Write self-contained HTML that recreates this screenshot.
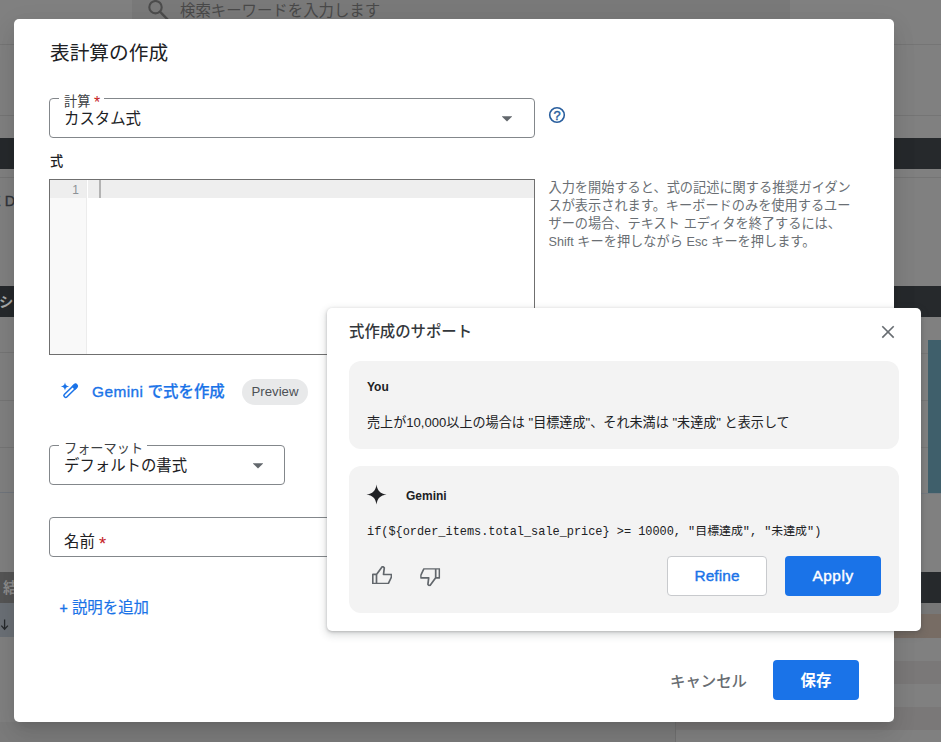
<!DOCTYPE html>
<html lang="ja">
<head>
<meta charset="utf-8">
<title>表計算の作成</title>
<style>
*{box-sizing:border-box;margin:0;padding:0}
html,body{width:941px;height:742px;overflow:hidden}
body{position:relative;background:#808080;font-family:"Liberation Sans","Noto Sans CJK JP",sans-serif;color:#202124}
.abs{position:absolute}
/* ---------- dimmed background page ---------- */
.bg{position:absolute;left:0;top:0;width:941px;height:742px;overflow:hidden}
.bg div{position:absolute}
.bgt{color:#4e4e4e;white-space:nowrap}
/* ---------- dialog ---------- */
#dlg{position:absolute;left:14px;top:19px;width:880px;height:703px;background:#fff;border-radius:5px;
 box-shadow:0 6px 9px -4px rgba(0,0,0,.10),0 14px 24px 2px rgba(0,0,0,.07),0 5px 24px 2px rgba(0,0,0,.06)}
#dlg .t{position:absolute;white-space:nowrap}
.field{position:absolute;border:1px solid #83878b;border-radius:4px;height:40px}
.field .lab{position:absolute;left:9px;top:-4px;background:#fff;padding:0 4px 0 5px;font-size:13.2px;line-height:14px;color:#3c4043;white-space:nowrap}
.field .val{position:absolute;left:14px;top:10px;font-size:15.4px;line-height:20px;color:#202124;white-space:nowrap}
.req{color:#c5221f;font-size:1.200em;line-height:0;position:relative;top:.150em}
.caret{position:absolute;width:10.800px;height:5.400px;background:#62676c;clip-path:polygon(0 0,100% 0,50% 100%);margin-left:-.4px;margin-top:.2px}
/* ---------- popup ---------- */
#pop{position:absolute;left:327px;top:308px;width:594px;height:323px;background:#fff;border-radius:5px;
 box-shadow:0 1px 3px 0 rgba(60,64,67,.3),0 3px 7px 2px rgba(60,64,67,.15)}
#pop .t{position:absolute;white-space:nowrap}
.card{position:absolute;left:22px;width:550px;background:#f3f3f3;border-radius:12px}
.btn{position:absolute;height:40px;border-radius:4px;font-size:15.4px;font-weight:bold;text-align:center;line-height:40px;white-space:nowrap}
</style>
</head>
<body>
<div class="bg">
  <!-- top search box -->
  <div style="left:132px;top:0;width:658px;height:20px;background:#797979"></div>
  <svg class="abs" style="left:146px;top:0" width="24" height="20" viewBox="0 0 24 20"><circle cx="9.500" cy="7.200" r="6.200" fill="none" stroke="#4c4c4c" stroke-width="2.100"/><path d="M13.900 11.700l7.800 7.800" stroke="#4c4c4c" stroke-width="2.400" fill="none"/></svg>
  <div class="bgt" style="left:180px;top:-1.500px;font-size:15.4px;line-height:24px;color:#494949">検索キーワードを入力します</div>
  <!-- left column rows -->
  <div style="left:0;top:44px;width:14px;height:1px;background:#757575"></div>
  <div style="left:0;top:115px;width:14px;height:1px;background:#757575"></div>
  <div style="left:0;top:138px;width:14px;height:31px;background:#26292c"></div>
  <div style="left:0;top:177px;width:14px;height:1px;background:#757575"></div>
  <div class="bgt" style="left:-9px;top:192px;font-size:14.5px;line-height:18px;color:#30343a;-webkit-text-stroke:.3px #30343a">E D</div>
  <div style="left:0;top:286px;width:14px;height:31px;background:#26292c"></div>
  <div class="bgt" style="left:-1px;top:293px;font-size:14.3px;line-height:18px;color:#a9a9a9;font-weight:bold">シ</div>
  <div style="left:0;top:352px;width:14px;height:1px;background:#757575"></div>
  <div style="left:0;top:400px;width:14px;height:1px;background:#757575"></div>
  <div style="left:0;top:447px;width:14px;height:1px;background:#757575"></div>
  <div style="left:0;top:492px;width:14px;height:1px;background:#70757c"></div>
  <div style="left:0;top:572px;width:14px;height:31px;background:#555555"></div>
  <div class="bgt" style="left:3px;top:579px;font-size:14.3px;line-height:18px;color:#8c8c8c;font-weight:bold">結</div>
  <div style="left:0;top:603px;width:14px;height:34px;background:#6b7076"></div>
  <svg class="abs" style="left:0;top:618px" width="10" height="14" viewBox="0 0 10 14"><path d="M4.6 1.5v9.5M1.3 7.6l3.3 3.6 3.3-3.6" fill="none" stroke="#26292c" stroke-width="1.3"/></svg>
  <!-- right column -->
  <div style="left:894px;top:44px;width:47px;height:1px;background:#757575"></div>
  <div style="left:894px;top:115px;width:47px;height:1px;background:#757575"></div>
  <div style="left:894px;top:138px;width:47px;height:31px;background:#26292c"></div>
  <div style="left:894px;top:177px;width:47px;height:1px;background:#757575"></div>
  <div style="left:894px;top:286px;width:47px;height:31px;background:#26292c"></div>
  <div style="left:921px;top:353px;width:7px;height:1px;background:#777777"></div>
  <div style="left:921px;top:400px;width:7px;height:1px;background:#777777"></div>
  <div style="left:921px;top:447px;width:7px;height:1px;background:#777777"></div>
  <div style="left:921px;top:493px;width:20px;height:1px;background:#747a80"></div>
  <div style="left:928px;top:340px;width:13px;height:153px;background:#3f5f6b"></div>
  <div style="left:921px;top:572px;width:20px;height:31px;background:#26292c"></div>
  <div style="left:921px;top:603px;width:20px;height:11px;background:#777777"></div>
  <div style="left:894px;top:614px;width:47px;height:24px;background:#776c64"></div>
  <div style="left:894px;top:661px;width:47px;height:23px;background:#7a7878"></div>
  <div style="left:894px;top:707px;width:47px;height:23px;background:#7a7878"></div>
  <!-- bottom -->
  <div style="left:0;top:722px;width:675px;height:20px;background:#7b7b7b"></div>
  <div style="left:675px;top:722px;width:1px;height:20px;background:#707070"></div>
  <div style="left:676px;top:722px;width:265px;height:8px;background:#7a7878"></div>
</div>

<div id="dlg">
  <div class="t" style="left:36px;top:20px;font-size:19.7px;line-height:28px;font-weight:400;color:#202124">表計算の作成</div>

  <!-- 計算 select -->
  <div class="field" style="left:35px;top:79px;width:486px">
    <div class="lab">計算 <span class="req">*</span></div>
    <div class="val">カスタム式</div>
    <div class="caret" style="left:452px;top:17px"></div>
  </div>
  <svg class="abs" style="left:534px;top:87px" width="18" height="18" viewBox="0 0 18 18"><circle cx="9" cy="9" r="7.3" fill="none" stroke="#2a5f9e" stroke-width="1.6"/><text x="9" y="13.600" text-anchor="middle" font-family="Liberation Sans, sans-serif" font-size="12.800" fill="#2a5f9e" stroke="#2a5f9e" stroke-width=".45">?</text></svg>

  <div class="t" style="left:36px;top:134px;font-size:13.2px;line-height:18px;font-weight:500;color:#202124">式</div>

  <!-- editor -->
  <div class="abs" style="left:35px;top:160px;width:486px;height:176px;border:1px solid #6f6f6f;background:#fff">
    <div class="abs" style="left:0;top:0;width:37px;height:174px;background:#f9f9f9;border-right:1px solid #ececec"></div>
    <div class="abs" style="left:0;top:0;width:36px;height:18px;background:#eeeeee"></div>
    <div class="abs" style="left:38px;top:0;width:446px;height:18px;background:#eeeeee"></div>
    <div class="abs" style="left:49px;top:0;width:2px;height:18px;background:#b3b3b3"></div>
    <div class="abs" style="left:0;top:0;width:29px;height:18px;text-align:right;font-size:12px;line-height:21px;color:#8c9196">1</div>
  </div>

  <!-- hint -->
  <div class="t" style="left:534.500px;top:160px;font-size:13.2px;line-height:18px;color:#6a6f74">入力を開始すると、式の記述に関する推奨ガイダン<br>スが表示されます。キーボードのみを使用するユー<br>ザーの場合、テキスト エディタを終了するには、<br><span style="font-size:12.600px">Shift</span> キーを押しながら <span style="font-size:12.600px">Esc</span> キーを押します。</div>

  <!-- gemini link -->
  <svg class="abs" style="left:46px;top:362px" width="20" height="20" viewBox="0 0 20 20">
    <path d="M5 1.200 C5.500 4 6.300 4.800 9.300 5.400 C6.300 6 5.500 6.800 5 9.600 C4.500 6.800 3.700 6 0.700 5.400 C3.700 4.800 4.500 4 5 1.200Z" fill="#1a73e8"/>
    <g transform="rotate(-44.500 10.500 10)"><rect x="2.200" y="8.200" width="16.500" height="3.500" rx="1.400" fill="none" stroke="#1a73e8" stroke-width="1.500"/><path d="M14.400 7.450h3.200a2.500 2.500 0 0 1 0 5h-3.200z" fill="#1a73e8"/></g>
  </svg>
  <div class="t" style="left:78px;top:362px;font-size:15.4px;line-height:22px;font-weight:500;color:#1a73e8;-webkit-text-stroke:.25px #1a73e8"><span style="letter-spacing:.45px;-webkit-text-stroke:.35px #1a73e8">Gemini</span> で式を作成</div>
  <div class="abs" style="left:228px;top:360px;width:66px;height:26px;border-radius:13px;background:#e8e9ea;font-size:13.2px;line-height:26px;text-align:center;color:#4d5156">Preview</div>

  <!-- format select -->
  <div class="field" style="left:35px;top:426px;width:236px">
    <div class="lab">フォーマット</div>
    <div class="val">デフォルトの書式</div>
    <div class="caret" style="left:203px;top:17px"></div>
  </div>

  <!-- name -->
  <div class="field" style="left:35px;top:498px;width:486px">
    <div class="val" style="top:14px">名前 <span class="req">*</span></div>
  </div>

  <div class="t" style="left:45.500px;top:578px;font-size:15.4px;line-height:22px;color:#1a73e8;font-weight:400;-webkit-text-stroke:.2px #1a73e8"><span style="font-size:14px;-webkit-text-stroke:.45px #1a73e8">+</span> 説明を追加</div>

  <div class="t" style="left:656px;top:651.500px;font-size:15.4px;line-height:22px;font-weight:500;color:#686d72">キャンセル</div>
  <div class="btn" style="left:759px;top:641px;width:86px;background:#1a73e8;color:#fff;line-height:42px">保存</div>
</div>

<div id="pop">
  <div class="t" style="left:22px;top:13px;font-size:15.4px;line-height:22px;font-weight:500;color:#33373b">式作成のサポート</div>
  <svg class="abs" style="left:552px;top:15px" width="18" height="18" viewBox="0 0 18 18"><path d="M3.300 3.200l11.400 11.400M14.700 3.200L3.300 14.600" stroke="#676c71" stroke-width="1.600" fill="none"/></svg>

  <div class="card" style="top:53px;height:88px">
    <div class="t" style="left:18px;top:17px;font-size:12px;line-height:18px;font-weight:bold;color:#202124">You</div>
    <div class="t" style="left:18px;top:53px;font-size:13.1px;line-height:18px;color:#202124">売上が10,000以上の場合は "目標達成"、それ未満は "未達成" と表示して</div>
  </div>

  <div class="card" style="top:158px;height:147px">
    <svg class="abs" style="left:17px;top:18px" width="21" height="21" viewBox="0 0 24 24"><path d="M12 0.5 C12.9 7.6 16.4 11.1 23.5 12 C16.4 12.9 12.9 16.4 12 23.5 C11.1 16.4 7.6 12.9 0.5 12 C7.6 11.1 11.1 7.6 12 0.5Z" fill="#202124"/></svg>
    <div class="t" style="left:57px;top:20.500px;font-size:12px;line-height:18px;font-weight:bold;color:#202124">Gemini</div>
    <div class="t" style="left:18px;top:57px;font-family:'Liberation Mono','Noto Sans CJK JP',monospace;font-size:11.9px;line-height:18px;color:#202124">if(${order_items.total_sale_price} &gt;= 10000, "目標達成", "未達成")</div>
    <svg class="abs" style="left:22.900px;top:99.600px" width="20.200" height="18.300" viewBox="0 0 20.200 18.300"><path d="M0.750 8.450H4.500V17.550H0.750Z M4.500 8.450L10 0.950Q10.700 0.350 11.300 0.950L12.300 1.950L11.500 8.500H19.450V11L16.300 17.550H4.500" fill="none" stroke="#62676c" stroke-width="1.700" stroke-linejoin="round"/></svg>
    <svg class="abs" style="left:70.800px;top:101.750px;transform:rotate(180deg)" width="20.200" height="18.300" viewBox="0 0 20.200 18.300"><path d="M0.750 8.450H4.500V17.550H0.750Z M4.500 8.450L10 0.950Q10.700 0.350 11.300 0.950L12.300 1.950L11.500 8.500H19.450V11L16.300 17.550H4.500" fill="none" stroke="#62676c" stroke-width="1.700" stroke-linejoin="round"/></svg>
    <div class="btn" style="left:318px;top:90px;width:100px;background:#fff;border:1px solid #c8cacd;color:#1a73e8;line-height:38px;font-weight:normal;-webkit-text-stroke:.4px #1a73e8;letter-spacing:.1px">Refine</div>
    <div class="btn" style="left:436px;top:90px;width:96px;background:#1a73e8;color:#fff;font-weight:normal;-webkit-text-stroke:.4px #fff;letter-spacing:.55px">Apply</div>
  </div>
</div>
</body>
</html>
